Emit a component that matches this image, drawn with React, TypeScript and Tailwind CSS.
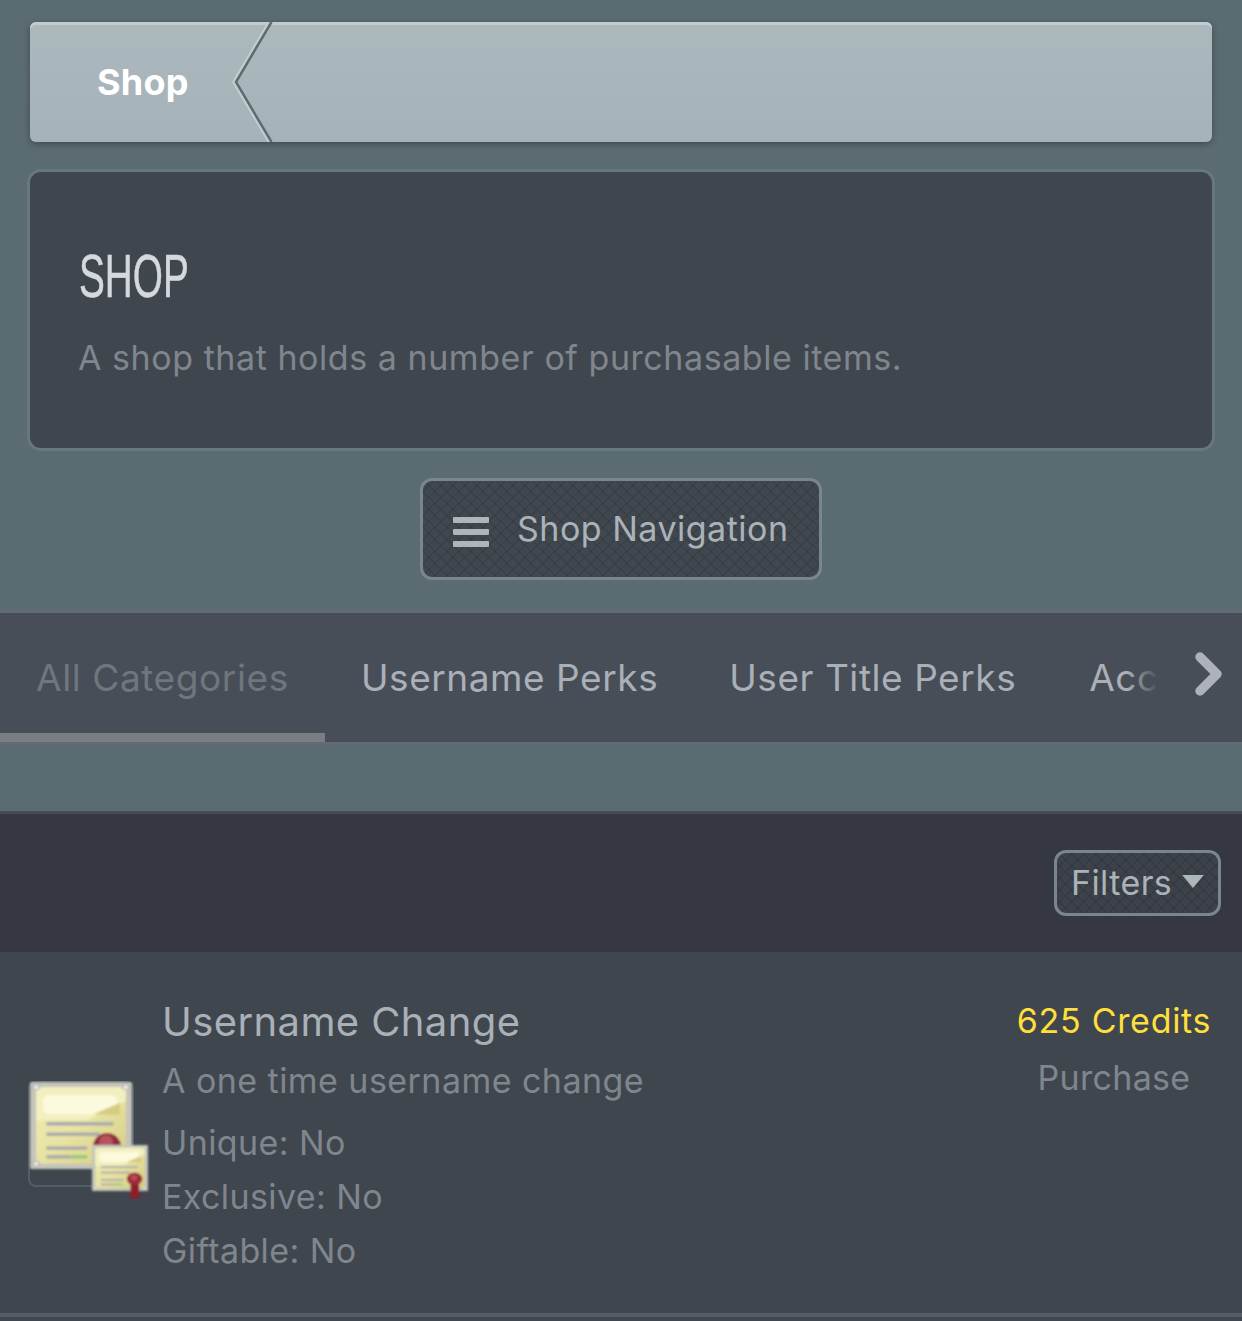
const weave =
  "[background-image:repeating-linear-gradient(45deg,rgba(0,0,0,0.1)_0,rgba(0,0,0,0.1)_1.5px,transparent_1.5px,transparent_8.5px),repeating-linear-gradient(-45deg,rgba(0,0,0,0.1)_0,rgba(0,0,0,0.1)_1.5px,transparent_1.5px,transparent_8.5px)]";

function CertSheet({ id, x, y, w, h, small }: { id: string; x: number; y: number; w: number; h: number; small?: boolean }) {
  return (
    <g transform={`translate(${x} ${y}) scale(${w / 100} ${h / 100})`}>
      <defs>
        <linearGradient id={id} x1="0" y1="0" x2="1" y2="1">
          <stop offset="0" stopColor="#efecb6" />
          <stop offset="0.5" stopColor="#e8e3a2" />
          <stop offset="1" stopColor="#d5cc82" />
        </linearGradient>
      </defs>
      <rect x="0" y="0" width="100" height="100" rx="2" fill="#c4c4ba" />
      <rect x="6" y="6" width="88" height="88" fill={`url(#${id})`} />
      <path d="M6 6h88v16L55 44H6z" fill="#f2f0c0" />
      <rect x="13" y="15" width="72" height="22" rx="6" fill="#fbfadc" />
      <path d="M62 37 88 24v14z" fill="#d6cb82" />
      <rect x="16" y="46" width="66" height="4" fill="#a9a9ad" />
      <rect x="16" y="58" width="52" height="4" fill="#a9a9ad" />
      <rect x="16" y="74" width="40" height="4" fill="#a9a9ad" />
      <rect x="16" y="84" width="24" height="4" fill="#a9a9ad" />
      <rect x="40" y="84" width="16" height="4" fill="#92c97c" />
      {[[6, 6], [94, 6], [6, 94], [94, 94]].map(([cx, cy]) => (
        <circle key={`${cx}-${cy}`} cx={cx} cy={cy} r="3" fill="#ececec" stroke="#a2a29c" strokeWidth="1" />
      ))}
      {small && (
        <>
          <path d="M69 80h15l1 40-8-6-9 6z" fill="#8e1f2a" />
          <circle cx="76" cy="74" r="14" fill="#9c2a37" />
          <circle cx="75" cy="71" r="6" fill="#b84d58" />
        </>
      )}
    </g>
  );
}

function CertIcon() {
  return (
    <div className="relative h-[106px] w-[122px] rounded-md">
      <div className="absolute left-0 top-0 h-[106px] w-[106px] rounded-lg border-2 border-[#545c65]" />
      <svg viewBox="0 0 122 118" className="absolute left-0 top-0 h-[118px] w-[122px]">
        <defs>
          <filter id="soft">
            <feGaussianBlur stdDeviation="0.9" />
          </filter>
        </defs>
        <g filter="url(#soft)">
          <CertSheet id="big" x={2} y={1} w={102} h={87} />
          <circle cx="79" cy="66" r="14" fill="#8f2b38" />
          <circle cx="78" cy="61" r="7" fill="#b4545e" />
          <CertSheet id="mini" x={64} y={64} w={56} h={46} small />
        </g>
      </svg>
    </div>
  );
}

export default function App() {
  return (
    <div className="flex h-[1321px] w-[1242px] flex-col overflow-hidden bg-[#5a6b72] font-['Inter',sans-serif]">
      <div className="px-[30px] pt-[22px]">
        <nav className="relative flex h-[120px] items-center overflow-hidden rounded-md bg-gradient-to-b from-[#abb8bc] to-[#a6b2b9] pl-[67px] shadow-[inset_0_3px_0_#c2cbce,0_2px_6px_rgba(0,0,0,0.3)]">
          <span className="text-[36px] font-bold leading-none tracking-[0.2px] text-white">Shop</span>
          <svg viewBox="0 0 50 120" className="absolute left-[199px] top-0 h-[120px] w-[50px]">
            <path d="M40 0 4.5 60 40 120" fill="none" stroke="#c3ccce" strokeWidth="2.5" />
            <path d="M42.5 0 7 60l35.5 60" fill="none" stroke="#5f6c6f" strokeWidth="2.5" />
          </svg>
        </nav>
      </div>

      <div className="px-[27px] pt-[27px]">
        <section className="h-[282px] rounded-[14px] border-[3px] border-[#65787e] bg-[#40464d] px-[48px] pt-[71px]">
          <h1 className="ml-px origin-left scale-x-[0.635] font-['Liberation_Sans',sans-serif] text-[61px] leading-[66px] text-[#d5d8de] [-webkit-text-stroke:0.6px_#d5d8de]">
            SHOP
          </h1>
          <p className="mt-[27px] text-[34px] leading-[44px] tracking-[0.55px] text-[#7f868e]">
            A shop that holds a number of purchasable items.
          </p>
        </section>
      </div>

      <div className="flex justify-center pt-[27px]">
        <button
          className={`flex h-[102px] w-[402px] items-center gap-[28px] rounded-[12px] border-[3px] border-[#79858f] bg-[#41474f] pl-[30px] ${weave}`}
        >
          <span className="mt-[6px] flex w-[36px] flex-col gap-[6px]">
            <span className="h-[6px] rounded-[1px] bg-[#adb6ba]" />
            <span className="h-[6px] rounded-[1px] bg-[#adb6ba]" />
            <span className="h-[6px] rounded-[1px] bg-[#adb6ba]" />
          </span>
          <span className="text-[34px] leading-none tracking-[0.5px] text-[#aab3b7]">Shop Navigation</span>
        </button>
      </div>

      <div className="relative mt-[30px] flex h-[135px] shrink-0 overflow-hidden border-y-[3px] border-[#636a76] bg-[#484e57]">
        <div className="relative flex h-full w-[325px] shrink-0 items-center pl-[36px]">
          <span className="whitespace-nowrap text-[37px] tracking-[0.6px] text-[#70767d]">All Categories</span>
          <span className="absolute bottom-0 left-0 h-[9px] w-full bg-[#7a7e82]" />
        </div>
        <div className="flex h-full items-center gap-[71px] whitespace-nowrap pl-[36px] text-[37px] tracking-[0.55px] text-[#aab0b8]">
          <span>Username Perks</span>
          <span>User Title Perks</span>
          <span className="relative ml-[2px] w-[68px]">
            Acc
            <span className="absolute bottom-0 right-[-2px] top-0 w-[32px] bg-gradient-to-r from-transparent to-[#484e57]" />
          </span>
        </div>
        <svg viewBox="0 0 30 44" className="absolute right-[18px] top-[39px] h-[44px] w-[30px]">
          <path d="M6 5 23 22 6 39" fill="none" stroke="#adb1b9" strokeWidth="9.5" strokeLinejoin="round" strokeLinecap="round" />
        </svg>
      </div>

      <div className="mt-[66px] flex h-[141px] shrink-0 items-center justify-end border-t-[3px] border-[#454c55] bg-[#353841] pr-[21px]">
        <button
          className={`flex h-[66px] w-[167px] items-center rounded-[12px] border-[3px] border-[#79858f] bg-[#3d414a] pl-[14px] ${weave}`}
        >
          <span className="text-[34px] leading-none tracking-[0.4px] text-[#aab3b7]">Filters</span>
          <svg viewBox="0 0 20 12" className="mb-[3px] ml-[10px] h-[13px] w-[22px]">
            <path d="M0 0h20L10 12z" fill="#adb6ba" />
          </svg>
        </button>
      </div>

      <article className="flex h-[365px] shrink-0 border-b-[4px] border-[#565c66] bg-[#40464d]">
        <div className="ml-[28px] mt-[129px] w-[134px] shrink-0">
          <CertIcon />
        </div>
        <div className="flex-1 pt-[45px]">
          <h2 className="text-[40px] leading-[50px] tracking-[0.4px] text-[#aab0b8]">Username Change</h2>
          <p className="mt-[11px] text-[34px] leading-[46px] tracking-[0.45px] text-[#7f868e]">A one time username change</p>
          <ul className="mt-[12px] text-[34px] leading-[54px] tracking-[0.4px] text-[#7f868e]">
            <li>Unique: No</li>
            <li>Exclusive: No</li>
            <li>Giftable: No</li>
          </ul>
        </div>
        <div className="flex w-[225px] shrink-0 flex-col items-center pr-[31px] pt-[47px]">
          <span className="whitespace-nowrap text-[34px] leading-[44px] tracking-[0.7px] text-[#ffdf3c]">625 Credits</span>
          <span className="mt-[13px] text-[34px] leading-[44px] tracking-[0.3px] text-[#7f868e]">Purchase</span>
        </div>
      </article>
      <div className="flex-1 bg-[#40464d]" />
    </div>
  );
}
